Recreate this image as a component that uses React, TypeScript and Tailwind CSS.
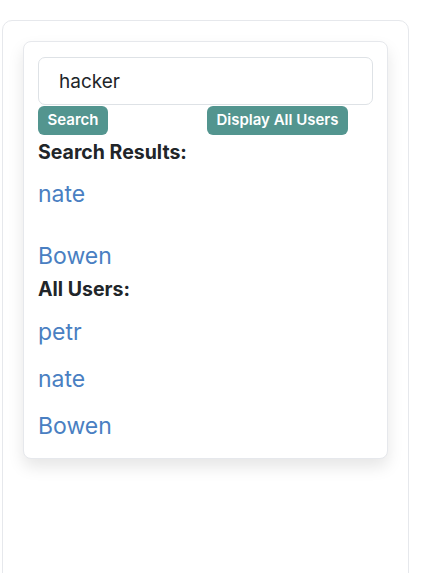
import React from 'react';

const searchResults = ['nate', 'Bowen'];
const allUsers = ['petr', 'nate', 'Bowen'];

export default function App() {
  return (
    <div className="h-[573px] w-[430px] overflow-hidden bg-white pl-[2px] pt-[20px] font-['Inter','Noto_Sans',sans-serif]">
      <div className="h-[600px] w-[407px] rounded-[10px] border border-[#e6e8ec] px-[20px] pt-[20px]">
        <div className="rounded-[8px] border border-[#e6e8ec] bg-white px-[14px] pb-[18px] pt-[15px] shadow-[0_8px_16px_rgba(0,0,0,0.1)]">
          <input
            type="text"
            defaultValue="hacker"
            className="block h-[48px] w-[335px] rounded-[7px] border border-[#dee2e6] px-[20px] text-[19px] text-[#212529] outline-none"
          />
          <div className="mt-[1px] flex">
            <button className="h-[29px] w-[70px] rounded-[6px] bg-[#53958f] text-[15px] font-semibold text-white">
              Search
            </button>
            <button className="ml-[99px] h-[29px] w-[141px] rounded-[6px] bg-[#53958f] text-[15px] font-semibold text-white">
              Display All Users
            </button>
          </div>

          <h3 className="mt-[5px] text-[19.5px] font-bold leading-[24px] text-[#212529]">Search Results:</h3>
          <a className="mt-[16px] block text-[23px] leading-[28px] text-[#4a7fc2]">{searchResults[0]}</a>
          <a className="mt-[34px] block text-[23px] leading-[28px] text-[#4a7fc2]">{searchResults[1]}</a>

          <h3 className="mt-[7px] text-[19.5px] font-bold leading-[24px] text-[#212529]">All Users:</h3>
          <div className="mt-[17px] flex flex-col gap-[19px]">
            {allUsers.map((u, i) => (
              <a key={i} className="block text-[23px] leading-[28px] text-[#4a7fc2]">
                {u}
              </a>
            ))}
          </div>
        </div>
      </div>
    </div>
  );
}
